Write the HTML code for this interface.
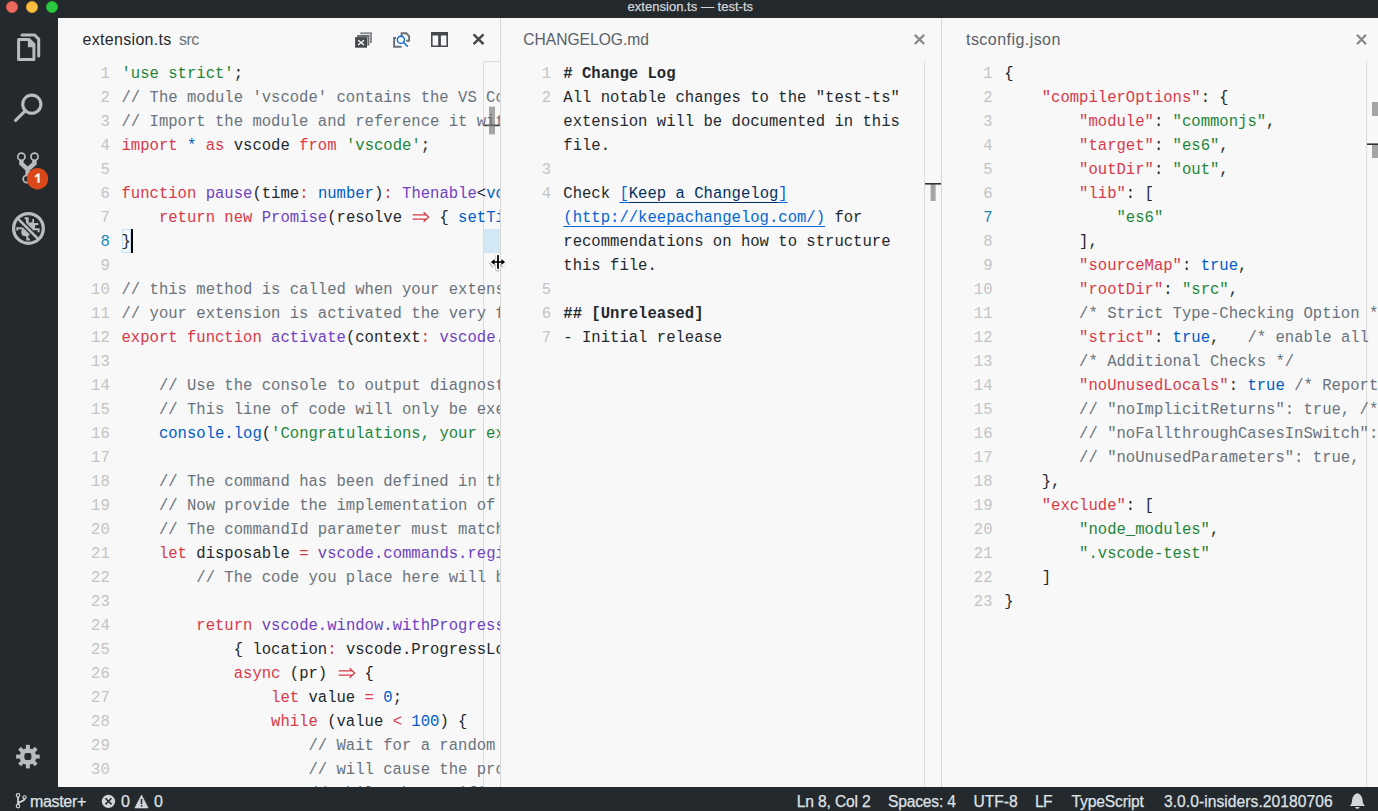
<!DOCTYPE html>
<html><head><meta charset="utf-8"><style>
*{margin:0;padding:0;box-sizing:border-box}
html,body{width:1378px;height:811px;overflow:hidden;background:#24292e}
body{position:relative;font-family:"Liberation Sans",sans-serif}
.abs{position:absolute}
.grp{position:absolute;top:18px;height:769px;background:#f8f8f8}
.num{position:absolute;width:60px;text-align:right;font:15.58px "Liberation Mono",monospace;line-height:24px;color:#c4c4c4;white-space:pre}
.num.act{color:#2188b6}
.code{position:absolute;font:15.58px "Liberation Mono",monospace;line-height:24px;white-space:pre;color:#24292e}
.code.b{font-weight:bold}
.lnk{color:#0366d6;text-decoration:underline;text-underline-offset:4px}
.arw{display:inline-block;width:18.7px;height:24px;vertical-align:top}
.arw svg{display:block;overflow:visible}
.lbl{position:absolute;line-height:20px;white-space:pre}
</style></head><body>
<div class="grp" style="left:58px;width:442px"></div>
<div class="abs" style="left:500px;top:18px;width:1px;height:769px;background:#d6d6d6"></div>
<div class="grp" style="left:501px;width:440px"></div>
<div class="abs" style="left:941px;top:18px;width:1px;height:769px;background:#d6d6d6"></div>
<div class="grp" style="left:942px;width:436px"></div>
<svg class="abs" style="left:0;top:0;pointer-events:none" width="1378" height="811" viewBox="0 0 1378 811">
 <!-- scroll decorations -->
 <path d="M483.5 787 V61.5 H500" fill="none" stroke="#dcdcdc" stroke-width="1"/>
 <rect x="484" y="229" width="16" height="24" fill="#d3e8f5"/>
 <rect x="489" y="106.7" width="6" height="27.7" fill="#a5a5a5"/>
 <rect x="484" y="124.6" width="16" height="1.6" fill="#333"/>
 <path d="M924.5 61 V787" stroke="#dcdcdc" stroke-width="1"/>
 <rect x="930.6" y="184" width="5" height="17" fill="#a5a5a5"/>
 <rect x="925" y="183" width="16" height="1.6" fill="#333"/>
 <path d="M1366.5 61 V787" stroke="#dcdcdc" stroke-width="1"/>
 <rect x="1372" y="102" width="6" height="14" fill="#a5a5a5"/>
 <rect x="1372" y="144" width="6" height="14" fill="#a5a5a5"/>
 <rect x="1367" y="143.4" width="11" height="1.6" fill="#333"/>
 <!-- cursor & bracket match -->
 <rect x="122.5" y="229.5" width="8" height="23" fill="none" stroke="#c4e3f8" stroke-width="1"/>
</svg>

<div class="abs" style="left:58px;top:18px;width:442px;height:769px;overflow:hidden">
<div class="abs" style="left:-58px;top:-18px;width:1378px;height:811px">
<div class="num" style="top:62px;left:49.8px">1</div>
<div class="code" style="top:62px;left:121.5px"><span style="color:#22863a">&#x27;use strict&#x27;</span><span style="color:#24292e">;</span></div>
<div class="num" style="top:86px;left:49.8px">2</div>
<div class="code" style="top:86px;left:121.5px"><span style="color:#6a737d">// The module &#x27;vscode&#x27; contains the VS Code extensibility API</span></div>
<div class="num" style="top:110px;left:49.8px">3</div>
<div class="code" style="top:110px;left:121.5px"><span style="color:#6a737d">// Import the module and reference it with the alias vscode in your code below</span></div>
<div class="num" style="top:134px;left:49.8px">4</div>
<div class="code" style="top:134px;left:121.5px"><span style="color:#d73a49">import</span><span style="color:#24292e"> </span><span style="color:#005cc5">*</span><span style="color:#24292e"> </span><span style="color:#d73a49">as</span><span style="color:#24292e"> vscode </span><span style="color:#d73a49">from</span><span style="color:#24292e"> </span><span style="color:#22863a">&#x27;vscode&#x27;</span><span style="color:#24292e">;</span></div>
<div class="num" style="top:158px;left:49.8px">5</div>
<div class="num" style="top:182px;left:49.8px">6</div>
<div class="code" style="top:182px;left:121.5px"><span style="color:#d73a49">function</span><span style="color:#24292e"> </span><span style="color:#6f42c1">pause</span><span style="color:#24292e">(time</span><span style="color:#d73a49">:</span><span style="color:#24292e"> </span><span style="color:#005cc5">number</span><span style="color:#24292e">)</span><span style="color:#d73a49">:</span><span style="color:#24292e"> </span><span style="color:#6f42c1">Thenable</span><span style="color:#24292e">&lt;</span><span style="color:#005cc5">void</span><span style="color:#24292e">&gt; {</span></div>
<div class="num" style="top:206px;left:49.8px">7</div>
<div class="code" style="top:206px;left:121.5px"><span style="color:#24292e">    </span><span style="color:#d73a49">return</span><span style="color:#24292e"> </span><span style="color:#d73a49">new</span><span style="color:#24292e"> </span><span style="color:#6f42c1">Promise</span><span style="color:#24292e">(resolve </span><span style="color:#d73a49"><span class="arw"><svg width="18.7" height="24" viewBox="0 0 18.7 24"><path d="M1.6 8.9H14.8M1.6 13.1H14.8M12.6 6.2L17.6 11L12.6 15.8" fill="none" stroke="currentColor" stroke-width="1.35"/></svg></span></span><span style="color:#24292e"> { </span><span style="color:#005cc5">setTimeout</span><span style="color:#24292e">(resolve, time) });</span></div>
<div class="num act" style="top:230px;left:49.8px">8</div>
<div class="code" style="top:230px;left:121.5px"><span style="color:#24292e">}</span></div>
<div class="num" style="top:254px;left:49.8px">9</div>
<div class="num" style="top:278px;left:49.8px">10</div>
<div class="code" style="top:278px;left:121.5px"><span style="color:#6a737d">// this method is called when your extension is activated</span></div>
<div class="num" style="top:302px;left:49.8px">11</div>
<div class="code" style="top:302px;left:121.5px"><span style="color:#6a737d">// your extension is activated the very first time the command is executed</span></div>
<div class="num" style="top:326px;left:49.8px">12</div>
<div class="code" style="top:326px;left:121.5px"><span style="color:#d73a49">export</span><span style="color:#24292e"> </span><span style="color:#d73a49">function</span><span style="color:#24292e"> </span><span style="color:#6f42c1">activate</span><span style="color:#24292e">(context</span><span style="color:#d73a49">:</span><span style="color:#24292e"> </span><span style="color:#6f42c1">vscode.ExtensionContext</span><span style="color:#24292e">) {</span></div>
<div class="num" style="top:350px;left:49.8px">13</div>
<div class="num" style="top:374px;left:49.8px">14</div>
<div class="code" style="top:374px;left:121.5px"><span style="color:#24292e">    </span><span style="color:#6a737d">// Use the console to output diagnostic information</span></div>
<div class="num" style="top:398px;left:49.8px">15</div>
<div class="code" style="top:398px;left:121.5px"><span style="color:#24292e">    </span><span style="color:#6a737d">// This line of code will only be executed once</span></div>
<div class="num" style="top:422px;left:49.8px">16</div>
<div class="code" style="top:422px;left:121.5px"><span style="color:#24292e">    </span><span style="color:#005cc5">console.log</span><span style="color:#24292e">(</span><span style="color:#22863a">&#x27;Congratulations, your extension is now active!&#x27;</span><span style="color:#24292e">);</span></div>
<div class="num" style="top:446px;left:49.8px">17</div>
<div class="num" style="top:470px;left:49.8px">18</div>
<div class="code" style="top:470px;left:121.5px"><span style="color:#24292e">    </span><span style="color:#6a737d">// The command has been defined in the package.json file</span></div>
<div class="num" style="top:494px;left:49.8px">19</div>
<div class="code" style="top:494px;left:121.5px"><span style="color:#24292e">    </span><span style="color:#6a737d">// Now provide the implementation of the command</span></div>
<div class="num" style="top:518px;left:49.8px">20</div>
<div class="code" style="top:518px;left:121.5px"><span style="color:#24292e">    </span><span style="color:#6a737d">// The commandId parameter must match the command field</span></div>
<div class="num" style="top:542px;left:49.8px">21</div>
<div class="code" style="top:542px;left:121.5px"><span style="color:#24292e">    </span><span style="color:#d73a49">let</span><span style="color:#24292e"> disposable </span><span style="color:#d73a49">=</span><span style="color:#24292e"> </span><span style="color:#6f42c1">vscode.commands.registerCommand</span><span style="color:#24292e">(</span></div>
<div class="num" style="top:566px;left:49.8px">22</div>
<div class="code" style="top:566px;left:121.5px"><span style="color:#24292e">        </span><span style="color:#6a737d">// The code you place here will be executed</span></div>
<div class="num" style="top:590px;left:49.8px">23</div>
<div class="num" style="top:614px;left:49.8px">24</div>
<div class="code" style="top:614px;left:121.5px"><span style="color:#24292e">        </span><span style="color:#d73a49">return</span><span style="color:#24292e"> </span><span style="color:#6f42c1">vscode.window.withProgress</span><span style="color:#24292e">(</span></div>
<div class="num" style="top:638px;left:49.8px">25</div>
<div class="code" style="top:638px;left:121.5px"><span style="color:#24292e">            { location</span><span style="color:#d73a49">:</span><span style="color:#24292e"> vscode.ProgressLocation.Notification }</span></div>
<div class="num" style="top:662px;left:49.8px">26</div>
<div class="code" style="top:662px;left:121.5px"><span style="color:#24292e">            </span><span style="color:#d73a49">async</span><span style="color:#24292e"> (pr) </span><span style="color:#d73a49"><span class="arw"><svg width="18.7" height="24" viewBox="0 0 18.7 24"><path d="M1.6 8.9H14.8M1.6 13.1H14.8M12.6 6.2L17.6 11L12.6 15.8" fill="none" stroke="currentColor" stroke-width="1.35"/></svg></span></span><span style="color:#24292e"> {</span></div>
<div class="num" style="top:686px;left:49.8px">27</div>
<div class="code" style="top:686px;left:121.5px"><span style="color:#24292e">                </span><span style="color:#d73a49">let</span><span style="color:#24292e"> value </span><span style="color:#d73a49">=</span><span style="color:#24292e"> </span><span style="color:#005cc5">0</span><span style="color:#24292e">;</span></div>
<div class="num" style="top:710px;left:49.8px">28</div>
<div class="code" style="top:710px;left:121.5px"><span style="color:#24292e">                </span><span style="color:#d73a49">while</span><span style="color:#24292e"> (value </span><span style="color:#d73a49">&lt;</span><span style="color:#24292e"> </span><span style="color:#005cc5">100</span><span style="color:#24292e">) {</span></div>
<div class="num" style="top:734px;left:49.8px">29</div>
<div class="code" style="top:734px;left:121.5px"><span style="color:#24292e">                    </span><span style="color:#6a737d">// Wait for a random amount of time</span></div>
<div class="num" style="top:758px;left:49.8px">30</div>
<div class="code" style="top:758px;left:121.5px"><span style="color:#24292e">                    </span><span style="color:#6a737d">// will cause the progress to advance</span></div>
<div class="num" style="top:782px;left:49.8px">31</div>
<div class="code" style="top:782px;left:121.5px"><span style="color:#24292e">                    </span><span style="color:#6a737d">// while the notification is visible</span></div>
</div></div>
<div class="abs" style="left:501px;top:18px;width:440px;height:769px;overflow:hidden">
<div class="abs" style="left:-501px;top:-18px;width:1378px;height:811px">
<div class="num" style="top:62px;left:491px">1</div>
<div class="code b" style="top:62px;left:563.3px"><span style="color:#24292e"># Change Log</span></div>
<div class="num" style="top:86px;left:491px">2</div>
<div class="code" style="top:86px;left:563.3px"><span style="color:#24292e">All notable changes to the &quot;test-ts&quot;</span></div>
<div class="code" style="top:110px;left:563.3px"><span style="color:#24292e">extension will be documented in this</span></div>
<div class="code" style="top:134px;left:563.3px"><span style="color:#24292e">file.</span></div>
<div class="num" style="top:158px;left:491px">3</div>
<div class="code" style="top:158px;left:563.3px"></div>
<div class="num" style="top:182px;left:491px">4</div>
<div class="code" style="top:182px;left:563.3px"><span style="color:#24292e">Check </span><span class="lnk">[</span><span class="lnk" style="color:#032f62">Keep a Changelog</span><span class="lnk">]</span></div>
<div class="code" style="top:206px;left:563.3px"><span class="lnk">(http://keepachangelog.com/)</span><span style="color:#24292e"> for</span></div>
<div class="code" style="top:230px;left:563.3px"><span style="color:#24292e">recommendations on how to structure</span></div>
<div class="code" style="top:254px;left:563.3px"><span style="color:#24292e">this file.</span></div>
<div class="num" style="top:278px;left:491px">5</div>
<div class="code" style="top:278px;left:563.3px"></div>
<div class="num" style="top:302px;left:491px">6</div>
<div class="code b" style="top:302px;left:563.3px"><span style="color:#24292e">## [Unreleased]</span></div>
<div class="num" style="top:326px;left:491px">7</div>
<div class="code" style="top:326px;left:563.3px"><span style="color:#24292e">- Initial release</span></div>
</div></div>
<div class="abs" style="left:942px;top:18px;width:436px;height:769px;overflow:hidden">
<div class="abs" style="left:-942px;top:-18px;width:1378px;height:811px">
<div class="num" style="top:62px;left:932.5px">1</div>
<div class="code" style="top:62px;left:1004.3px"><span style="color:#24292e">{</span></div>
<div class="num" style="top:86px;left:932.5px">2</div>
<div class="code" style="top:86px;left:1004.3px"><span style="color:#24292e">    </span><span style="color:#d73a49">&quot;compilerOptions&quot;</span><span style="color:#24292e">: {</span></div>
<div class="num" style="top:110px;left:932.5px">3</div>
<div class="code" style="top:110px;left:1004.3px"><span style="color:#24292e">        </span><span style="color:#d73a49">&quot;module&quot;</span><span style="color:#24292e">: </span><span style="color:#22863a">&quot;commonjs&quot;</span><span style="color:#24292e">,</span></div>
<div class="num" style="top:134px;left:932.5px">4</div>
<div class="code" style="top:134px;left:1004.3px"><span style="color:#24292e">        </span><span style="color:#d73a49">&quot;target&quot;</span><span style="color:#24292e">: </span><span style="color:#22863a">&quot;es6&quot;</span><span style="color:#24292e">,</span></div>
<div class="num" style="top:158px;left:932.5px">5</div>
<div class="code" style="top:158px;left:1004.3px"><span style="color:#24292e">        </span><span style="color:#d73a49">&quot;outDir&quot;</span><span style="color:#24292e">: </span><span style="color:#22863a">&quot;out&quot;</span><span style="color:#24292e">,</span></div>
<div class="num" style="top:182px;left:932.5px">6</div>
<div class="code" style="top:182px;left:1004.3px"><span style="color:#24292e">        </span><span style="color:#d73a49">&quot;lib&quot;</span><span style="color:#24292e">: [</span></div>
<div class="num act" style="top:206px;left:932.5px">7</div>
<div class="code" style="top:206px;left:1004.3px"><span style="color:#24292e">            </span><span style="color:#22863a">&quot;es6&quot;</span></div>
<div class="num" style="top:230px;left:932.5px">8</div>
<div class="code" style="top:230px;left:1004.3px"><span style="color:#24292e">        ],</span></div>
<div class="num" style="top:254px;left:932.5px">9</div>
<div class="code" style="top:254px;left:1004.3px"><span style="color:#24292e">        </span><span style="color:#d73a49">&quot;sourceMap&quot;</span><span style="color:#24292e">: </span><span style="color:#005cc5">true</span><span style="color:#24292e">,</span></div>
<div class="num" style="top:278px;left:932.5px">10</div>
<div class="code" style="top:278px;left:1004.3px"><span style="color:#24292e">        </span><span style="color:#d73a49">&quot;rootDir&quot;</span><span style="color:#24292e">: </span><span style="color:#22863a">&quot;src&quot;</span><span style="color:#24292e">,</span></div>
<div class="num" style="top:302px;left:932.5px">11</div>
<div class="code" style="top:302px;left:1004.3px"><span style="color:#24292e">        </span><span style="color:#6a737d">/* Strict Type-Checking Option */</span></div>
<div class="num" style="top:326px;left:932.5px">12</div>
<div class="code" style="top:326px;left:1004.3px"><span style="color:#24292e">        </span><span style="color:#d73a49">&quot;strict&quot;</span><span style="color:#24292e">: </span><span style="color:#005cc5">true</span><span style="color:#24292e">,   </span><span style="color:#6a737d">/* enable all strict type-checking options */</span></div>
<div class="num" style="top:350px;left:932.5px">13</div>
<div class="code" style="top:350px;left:1004.3px"><span style="color:#24292e">        </span><span style="color:#6a737d">/* Additional Checks */</span></div>
<div class="num" style="top:374px;left:932.5px">14</div>
<div class="code" style="top:374px;left:1004.3px"><span style="color:#24292e">        </span><span style="color:#d73a49">&quot;noUnusedLocals&quot;</span><span style="color:#24292e">: </span><span style="color:#005cc5">true</span><span style="color:#24292e"> </span><span style="color:#6a737d">/* Report errors on unused locals. */</span></div>
<div class="num" style="top:398px;left:932.5px">15</div>
<div class="code" style="top:398px;left:1004.3px"><span style="color:#24292e">        </span><span style="color:#6a737d">// &quot;noImplicitReturns&quot;: true, /* Report error */</span></div>
<div class="num" style="top:422px;left:932.5px">16</div>
<div class="code" style="top:422px;left:1004.3px"><span style="color:#24292e">        </span><span style="color:#6a737d">// &quot;noFallthroughCasesInSwitch&quot;: true,</span></div>
<div class="num" style="top:446px;left:932.5px">17</div>
<div class="code" style="top:446px;left:1004.3px"><span style="color:#24292e">        </span><span style="color:#6a737d">// &quot;noUnusedParameters&quot;: true,    /* Report errors on unused parameters. */</span></div>
<div class="num" style="top:470px;left:932.5px">18</div>
<div class="code" style="top:470px;left:1004.3px"><span style="color:#24292e">    },</span></div>
<div class="num" style="top:494px;left:932.5px">19</div>
<div class="code" style="top:494px;left:1004.3px"><span style="color:#24292e">    </span><span style="color:#d73a49">&quot;exclude&quot;</span><span style="color:#24292e">: [</span></div>
<div class="num" style="top:518px;left:932.5px">20</div>
<div class="code" style="top:518px;left:1004.3px"><span style="color:#24292e">        </span><span style="color:#22863a">&quot;node_modules&quot;</span><span style="color:#24292e">,</span></div>
<div class="num" style="top:542px;left:932.5px">21</div>
<div class="code" style="top:542px;left:1004.3px"><span style="color:#24292e">        </span><span style="color:#22863a">&quot;.vscode-test&quot;</span></div>
<div class="num" style="top:566px;left:932.5px">22</div>
<div class="code" style="top:566px;left:1004.3px"><span style="color:#24292e">    ]</span></div>
<div class="num" style="top:590px;left:932.5px">23</div>
<div class="code" style="top:590px;left:1004.3px"><span style="color:#24292e">}</span></div>
</div></div>
<div class="lbl" style="left:627.6px;top:-2.80px;font-size:13px;letter-spacing:0.024px;color:#d1d5da;font-weight:normal;-webkit-text-stroke:0.25px #d1d5da">extension.ts — test-ts</div>
<div class="lbl" style="left:82.6px;top:30.21px;font-size:16px;letter-spacing:0.3px;color:#24292e;font-weight:normal">extension.ts</div>
<div class="lbl" style="left:179px;top:30.21px;font-size:16px;letter-spacing:-0.6px;color:#6a737d;font-weight:normal">src</div>
<div class="lbl" style="left:523.3px;top:30.44px;font-size:15.6px;letter-spacing:0.0px;color:#586069;font-weight:normal">CHANGELOG.md</div>
<div class="lbl" style="left:966px;top:30.31px;font-size:16px;letter-spacing:0.45px;color:#586069;font-weight:normal">tsconfig.json</div>
<div class="lbl" style="left:29.9px;top:791.51px;font-size:16px;letter-spacing:-0.3px;color:#dfe2e5;font-weight:normal;-webkit-text-stroke:0.25px #dfe2e5">master+</div>
<div class="lbl" style="left:120.9px;top:791.51px;font-size:16px;letter-spacing:0px;color:#dfe2e5;font-weight:normal;-webkit-text-stroke:0.25px #dfe2e5">0</div>
<div class="lbl" style="left:154.1px;top:791.51px;font-size:16px;letter-spacing:0px;color:#dfe2e5;font-weight:normal;-webkit-text-stroke:0.25px #dfe2e5">0</div>
<div class="lbl" style="left:796.8px;top:791.64px;font-size:15.6px;letter-spacing:-0.15px;color:#dfe2e5;font-weight:normal;-webkit-text-stroke:0.25px #dfe2e5">Ln 8, Col 2</div>
<div class="lbl" style="left:888px;top:791.64px;font-size:15.6px;letter-spacing:-0.188px;color:#dfe2e5;font-weight:normal;-webkit-text-stroke:0.25px #dfe2e5">Spaces: 4</div>
<div class="lbl" style="left:973.6px;top:791.64px;font-size:15.6px;letter-spacing:-0.025px;color:#dfe2e5;font-weight:normal;-webkit-text-stroke:0.25px #dfe2e5">UTF-8</div>
<div class="lbl" style="left:1035px;top:791.64px;font-size:15.6px;letter-spacing:-0.6px;color:#dfe2e5;font-weight:normal;-webkit-text-stroke:0.25px #dfe2e5">LF</div>
<div class="lbl" style="left:1071.5px;top:791.64px;font-size:15.6px;letter-spacing:-0.144px;color:#dfe2e5;font-weight:normal;-webkit-text-stroke:0.25px #dfe2e5">TypeScript</div>
<div class="lbl" style="left:1163.9px;top:791.64px;font-size:15.6px;letter-spacing:0.064px;color:#dfe2e5;font-weight:normal;-webkit-text-stroke:0.25px #dfe2e5">3.0.0-insiders.20180706</div>
<svg class="abs" style="left:0;top:0;pointer-events:none" width="1378" height="811" viewBox="0 0 1378 811">
 <!-- traffic lights -->
 <circle cx="12" cy="7" r="5.6" fill="#ee6a5f" stroke="#d9534a" stroke-width="0.8"/>
 <circle cx="32" cy="7" r="5.6" fill="#fbbd3f" stroke="#e0a32e" stroke-width="0.8"/>
 <circle cx="52" cy="7" r="5.6" fill="#2cc840" stroke="#22ad33" stroke-width="0.8"/>
 <!-- files icon -->
 <g fill="none" stroke="#b9bbbe" stroke-width="3" stroke-linejoin="round">
  <path d="M18.6 39.5 H29.2 L33.9 44.2 V59.5 H18.6 Z"/>
  <path d="M22 35 H34.6 L38.7 39.1 V56" stroke-linecap="round"/>
 </g>
 <path d="M27.9 39.5 V47.2 H33.9 V44.2 L29.2 39.5 Z" fill="#b9bbbe"/>
 <!-- search -->
 <g fill="none" stroke="#b9bbbe" stroke-width="3.1" stroke-linecap="round">
  <circle cx="31.8" cy="104.2" r="9.1"/>
  <path d="M25.2 110.8 L15.6 120.4"/>
 </g>
 <!-- scm -->
 <g fill="none" stroke="#b9bbbe" stroke-width="1.7">
  <circle cx="21.4" cy="156.7" r="3.6"/>
  <circle cx="34.5" cy="156.7" r="3.6"/>
  <circle cx="26.8" cy="179" r="3.6"/>
 </g>
 <path d="M21.4 160 V163.5 L27.6 169.5 V176 M34.5 160 V163.5 L27.6 169.5" fill="none" stroke="#b9bbbe" stroke-width="4.4" stroke-linejoin="miter"/>
 <circle cx="37.5" cy="178.8" r="10.7" fill="#d9481a"/>
 <path d="M37.3 173.5 H39.6 V182.8 H37.4 V176.3 C36.7 176.9 35.8 177.3 34.9 177.5 V175.5 C36 175.2 36.9 174.5 37.3 173.5 Z" fill="#fff"/>
 <!-- debug -->
 <defs><clipPath id="dbgc"><circle cx="28.45" cy="228.45" r="13.3"/></clipPath></defs>
 <circle cx="28.45" cy="228.45" r="14.85" fill="none" stroke="#b9bbbe" stroke-width="3.3"/>
 <g fill="#b9bbbe">
  <ellipse cx="28.2" cy="229.3" rx="8.4" ry="5.3" transform="rotate(-45 28.2 229.3)"/>
  <path d="M16.3 227.2 H22.5 V229.2 H18.2 V230.6 H16.3 Z"/>
  <path d="M24.6 217.3 H28.7 V223.5 H25.9 V219.2 H24.6 Z"/>
  <path d="M32.3 218.9 H34 V223.5 H32.3 Z"/>
  <path d="M33.5 223 H38.4 V225.1 H33.5 Z"/>
  <path d="M33.4 228.2 H39.6 V232.3 H37.6 V230.2 H33.4 Z"/>
  <path d="M26.3 235 H28.3 V238.6 H29.9 V240.6 H26.3 Z"/>
 </g>
 <path d="M15 215.8 L41.4 242.2" stroke="#24292e" stroke-width="5.4" clip-path="url(#dbgc)"/>
 <path d="M17.6 218.4 L39.2 240" stroke="#b9bbbe" stroke-width="2.6"/>
 <!-- gear -->
 <g transform="translate(27.9 756.6)" fill="#b9bbbe">
  <path id="tooth" d="M-2 -11.8 H2 V11.8 H-2 Z"/>
  <use href="#tooth" transform="rotate(45)"/>
  <use href="#tooth" transform="rotate(90)"/>
  <use href="#tooth" transform="rotate(135)"/>
  <circle r="8.4"/>
 </g>
 <rect x="24.4" y="753.1" width="7" height="7" rx="2" fill="#24292e"/>
 <!-- tab actions g1 -->
 <g>
  <path d="M360.2 33.2 H371 V42.9" fill="none" stroke="#8d8f93" stroke-width="2"/>
  <path d="M357.2 36 H368.4 V45.6" fill="none" stroke="#6a6d72" stroke-width="2"/>
  <rect x="355.1" y="37.1" width="11.9" height="10.6" fill="#45484d"/>
  <path d="M358.2 40.2 L364 45 M364 40.2 L358.2 45" stroke="#fff" stroke-width="1.4"/>
 </g>
 <g fill="none" stroke="#6a6d72" stroke-width="1.9">
  <path d="M396 38 H394.1 V46.8 H401.6"/>
  <path d="M401.6 35.9 V33.3 H406.3 L409.1 36.1 V40.8 H406.3"/>
 </g>
 <g fill="none" stroke="#0366d6" stroke-width="1.4" stroke-linecap="round">
  <circle cx="400.9" cy="39.8" r="3.6"/>
  <path d="M403.5 42.4 L407.4 46.3"/>
 </g>
 <g fill="#45484d">
  <path fill-rule="evenodd" d="M431 32 H448 V47 H431 Z M432.6 35.6 V45.6 H438.2 V35.6 Z M440.9 35.6 V45.6 H446.4 V35.6 Z"/>
 </g>
 <path d="M473.6 34.4 L483.5 44.2 M483.5 34.4 L473.6 44.2" stroke="#45484d" stroke-width="2.5"/>
 <path d="M914.8 34.9 L924.2 44 M924.2 34.9 L914.8 44" stroke="#8a8a8a" stroke-width="2.3"/>
 <path d="M1357 34.8 L1366 44.3 M1366 34.8 L1357 44.3" stroke="#8a8a8a" stroke-width="2.3"/>
 <rect x="131" y="229" width="2" height="24" fill="#000"/>
 <!-- mouse cursor -->
 <g fill="#000" opacity="0.25" transform="translate(-0.6 1.2)">
  <path d="M496 254 H500 V260 L503 257.5 L506.6 262 L503 266.5 L500 264 V270 H496 V264 L493 266.5 L489.4 262 L493 257.5 L496 260 Z"/>
 </g>
 <path d="M496 254 H500 V260 L503 257.5 L506.6 262 L503 266.5 L500 264 V270 H496 V264 L493 266.5 L489.4 262 L493 257.5 L496 260 Z" fill="#fff"/>
 <g fill="#000">
  <rect x="497.1" y="255.1" width="1.8" height="13.7"/>
  <rect x="492.5" y="261.2" width="11" height="1.6"/>
  <path d="M490.9 262 L494.6 258.9 V265.1 Z M505.1 262 L501.4 258.9 V265.1 Z"/>
 </g>
 <!-- status icons -->
 <g fill="none" stroke="#d6d9dc" stroke-width="1.15">
  <circle cx="18" cy="795.3" r="1.75"/>
  <circle cx="18" cy="806.1" r="1.75"/>
  <circle cx="24.5" cy="797.3" r="1.6"/>
 </g>
 <path d="M18 797 V804.4 M24.5 798.9 C24.5 801.6 19.2 801 18 803.6" fill="none" stroke="#d6d9dc" stroke-width="1.7"/>
 <circle cx="108.45" cy="801.35" r="6.65" fill="#d1d5da"/>
 <path d="M105.4 798.3 L111.5 804.4 M111.5 798.3 L105.4 804.4" stroke="#24292e" stroke-width="1.5"/>
 <path d="M141.5 795 L148.2 808 H134.8 Z" fill="#d1d5da" stroke="#d1d5da" stroke-width="0.6" stroke-linejoin="round"/>
 <path d="M141.5 799 V804" stroke="#24292e" stroke-width="1.5"/>
 <rect x="140.8" y="805" width="1.5" height="1.5" fill="#24292e"/>
 <path d="M1357.3 793.2 C1361.6 794.6 1362.4 797.6 1362.7 801 C1363 803.6 1363.6 804.6 1365.1 805.9 H1349.7 C1351.1 804.6 1351.7 803.6 1352 801 C1352.3 797.6 1353.1 794.6 1357.3 793.2 Z" fill="#d4d6d8"/>
 <path d="M1355 806.9 H1359.6 C1359.1 809.3 1355.5 809.3 1355 806.9 Z" fill="#d4d6d8"/>
</svg>
</body></html>
